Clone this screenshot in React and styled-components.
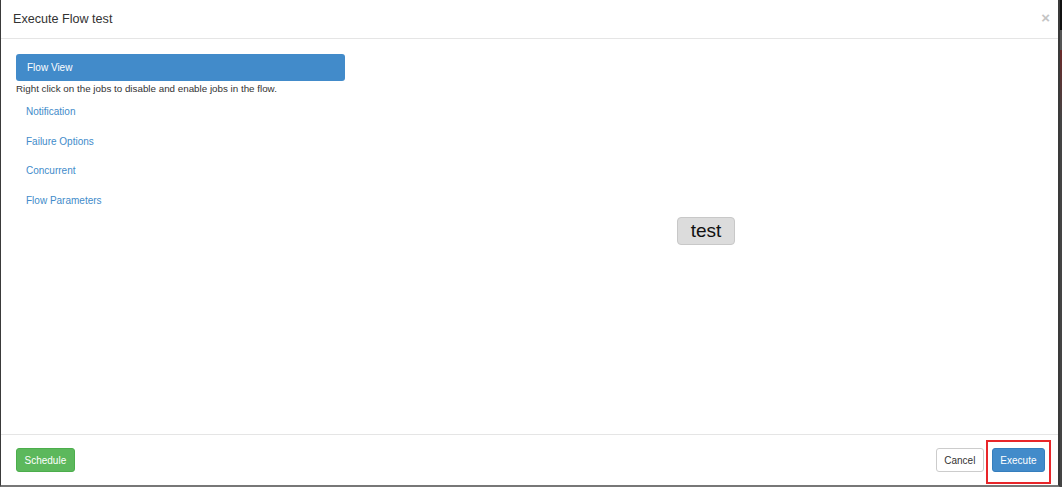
import React from "react";
import styled, { createGlobalStyle } from "styled-components";

const Global = createGlobalStyle`
  html, body {
    margin: 0;
    padding: 0;
    background: #2b2b2b;
  }
  body {
    font-family: "Liberation Sans", Arial, sans-serif;
  }
`;

const sections = ["Notification", "Failure Options", "Concurrent", "Flow Parameters"];

function App() {
  return (
    <>
      <Global />
      <Screen>
        <Modal>
          <Header>
            <Title>Execute Flow test</Title>
            <Close>×</Close>
          </Header>
          <Body>
            <Sidebar>
              <ActiveTab>Flow View</ActiveTab>
              <Hint>Right click on the jobs to disable and enable jobs in the flow.</Hint>
              <NavList>
                {sections.map((s) => (
                  <NavLink key={s}>{s}</NavLink>
                ))}
              </NavList>
            </Sidebar>
            <Graph>
              <JobNode style={{ left: 332, top: 163 }}>test</JobNode>
            </Graph>
          </Body>
          <Footer>
            <Button variant="success">Schedule</Button>
            <Actions>
              <Button>Cancel</Button>
              <Highlight>
                <Button variant="primary">Execute</Button>
              </Highlight>
            </Actions>
          </Footer>
        </Modal>
      </Screen>
    </>
  );
}

export default App;

const Screen = styled.div`
  width: 1062px;
  height: 487px;
  display: flex;
  background: linear-gradient(#111 0, #111 30px, #555 30px, #555 50px, #6a2a2a 50px, #444 120px);
`;

const Modal = styled.div`
  width: 1060px;
  height: 487px;
  box-sizing: border-box;
  background: #fff;
  border-left: 1px solid #3a3a3a;
  border-right: 2px solid #3a3a3a;
  border-bottom: 2px solid #777;
  display: flex;
  flex-direction: column;
`;

const Header = styled.div`
  height: 39px;
  box-sizing: border-box;
  border-bottom: 1px solid #e5e5e5;
  display: flex;
  align-items: center;
  justify-content: space-between;
  padding: 0 8px 0 12px;
`;

const Title = styled.h4`
  margin: 0;
  font-size: 12.6px;
  font-weight: normal;
  color: #333;
`;

const Close = styled.span`
  font-size: 15px;
  font-weight: bold;
  color: #c4c4c4;
  line-height: 1;
  margin-top: -4px;
`;

const Body = styled.div`
  flex: 1;
  display: flex;
  padding: 15px 0 0 15px;
`;

const Sidebar = styled.div`
  width: 329px;
  display: flex;
  flex-direction: column;
`;

const ActiveTab = styled.div`
  height: 27px;
  box-sizing: border-box;
  background: #428bca;
  border-radius: 3px;
  color: #fff;
  font-size: 10px;
  display: flex;
  align-items: center;
  padding-left: 11px;
`;

const Hint = styled.div`
  font-size: 9.8px;
  color: #333;
  margin-top: 2px;
`;

const NavList = styled.div`
  display: flex;
  flex-direction: column;
  gap: 17.7px;
  padding: 12px 0 0 10px;
`;

const NavLink = styled.a`
  font-size: 10px;
  color: #428bca;
  line-height: 12px;
`;

const Graph = styled.div`
  flex: 1;
  position: relative;
`;

const JobNode = styled.div`
  position: absolute;
  width: 58px;
  height: 28px;
  box-sizing: border-box;
  background: #dcdcdc;
  border: 1px solid #c8c8c8;
  border-radius: 4px;
  font-size: 19px;
  color: #111;
  display: flex;
  align-items: center;
  justify-content: center;
`;

const Footer = styled.div`
  height: 51px;
  box-sizing: border-box;
  border-top: 1px solid #e5e5e5;
  display: flex;
  justify-content: space-between;
  align-items: flex-start;
  padding: 13px 6px 0 15px;
`;

const Actions = styled.div`
  display: flex;
  align-items: flex-start;
  gap: 2px;
`;

const variants = {
  default: { bg: "#fff", border: "#ccc", color: "#333" },
  success: { bg: "#5cb85c", border: "#4cae4c", color: "#fff" },
  primary: { bg: "#428bca", border: "#357ebd", color: "#fff" },
};

const Button = styled.button`
  height: 24px;
  box-sizing: border-box;
  padding: 0 7.5px;
  font-family: inherit;
  font-size: 10px;
  border-radius: 3px;
  border: 1px solid ${(p) => variants[p.variant || "default"].border};
  background: ${(p) => variants[p.variant || "default"].bg};
  color: ${(p) => variants[p.variant || "default"].color};
`;

const Highlight = styled.div`
  border: 2px solid #e8262a;
  padding: 6px 4px 10px 4px;
  margin-top: -8px;
  margin-right: 1px;
`;
